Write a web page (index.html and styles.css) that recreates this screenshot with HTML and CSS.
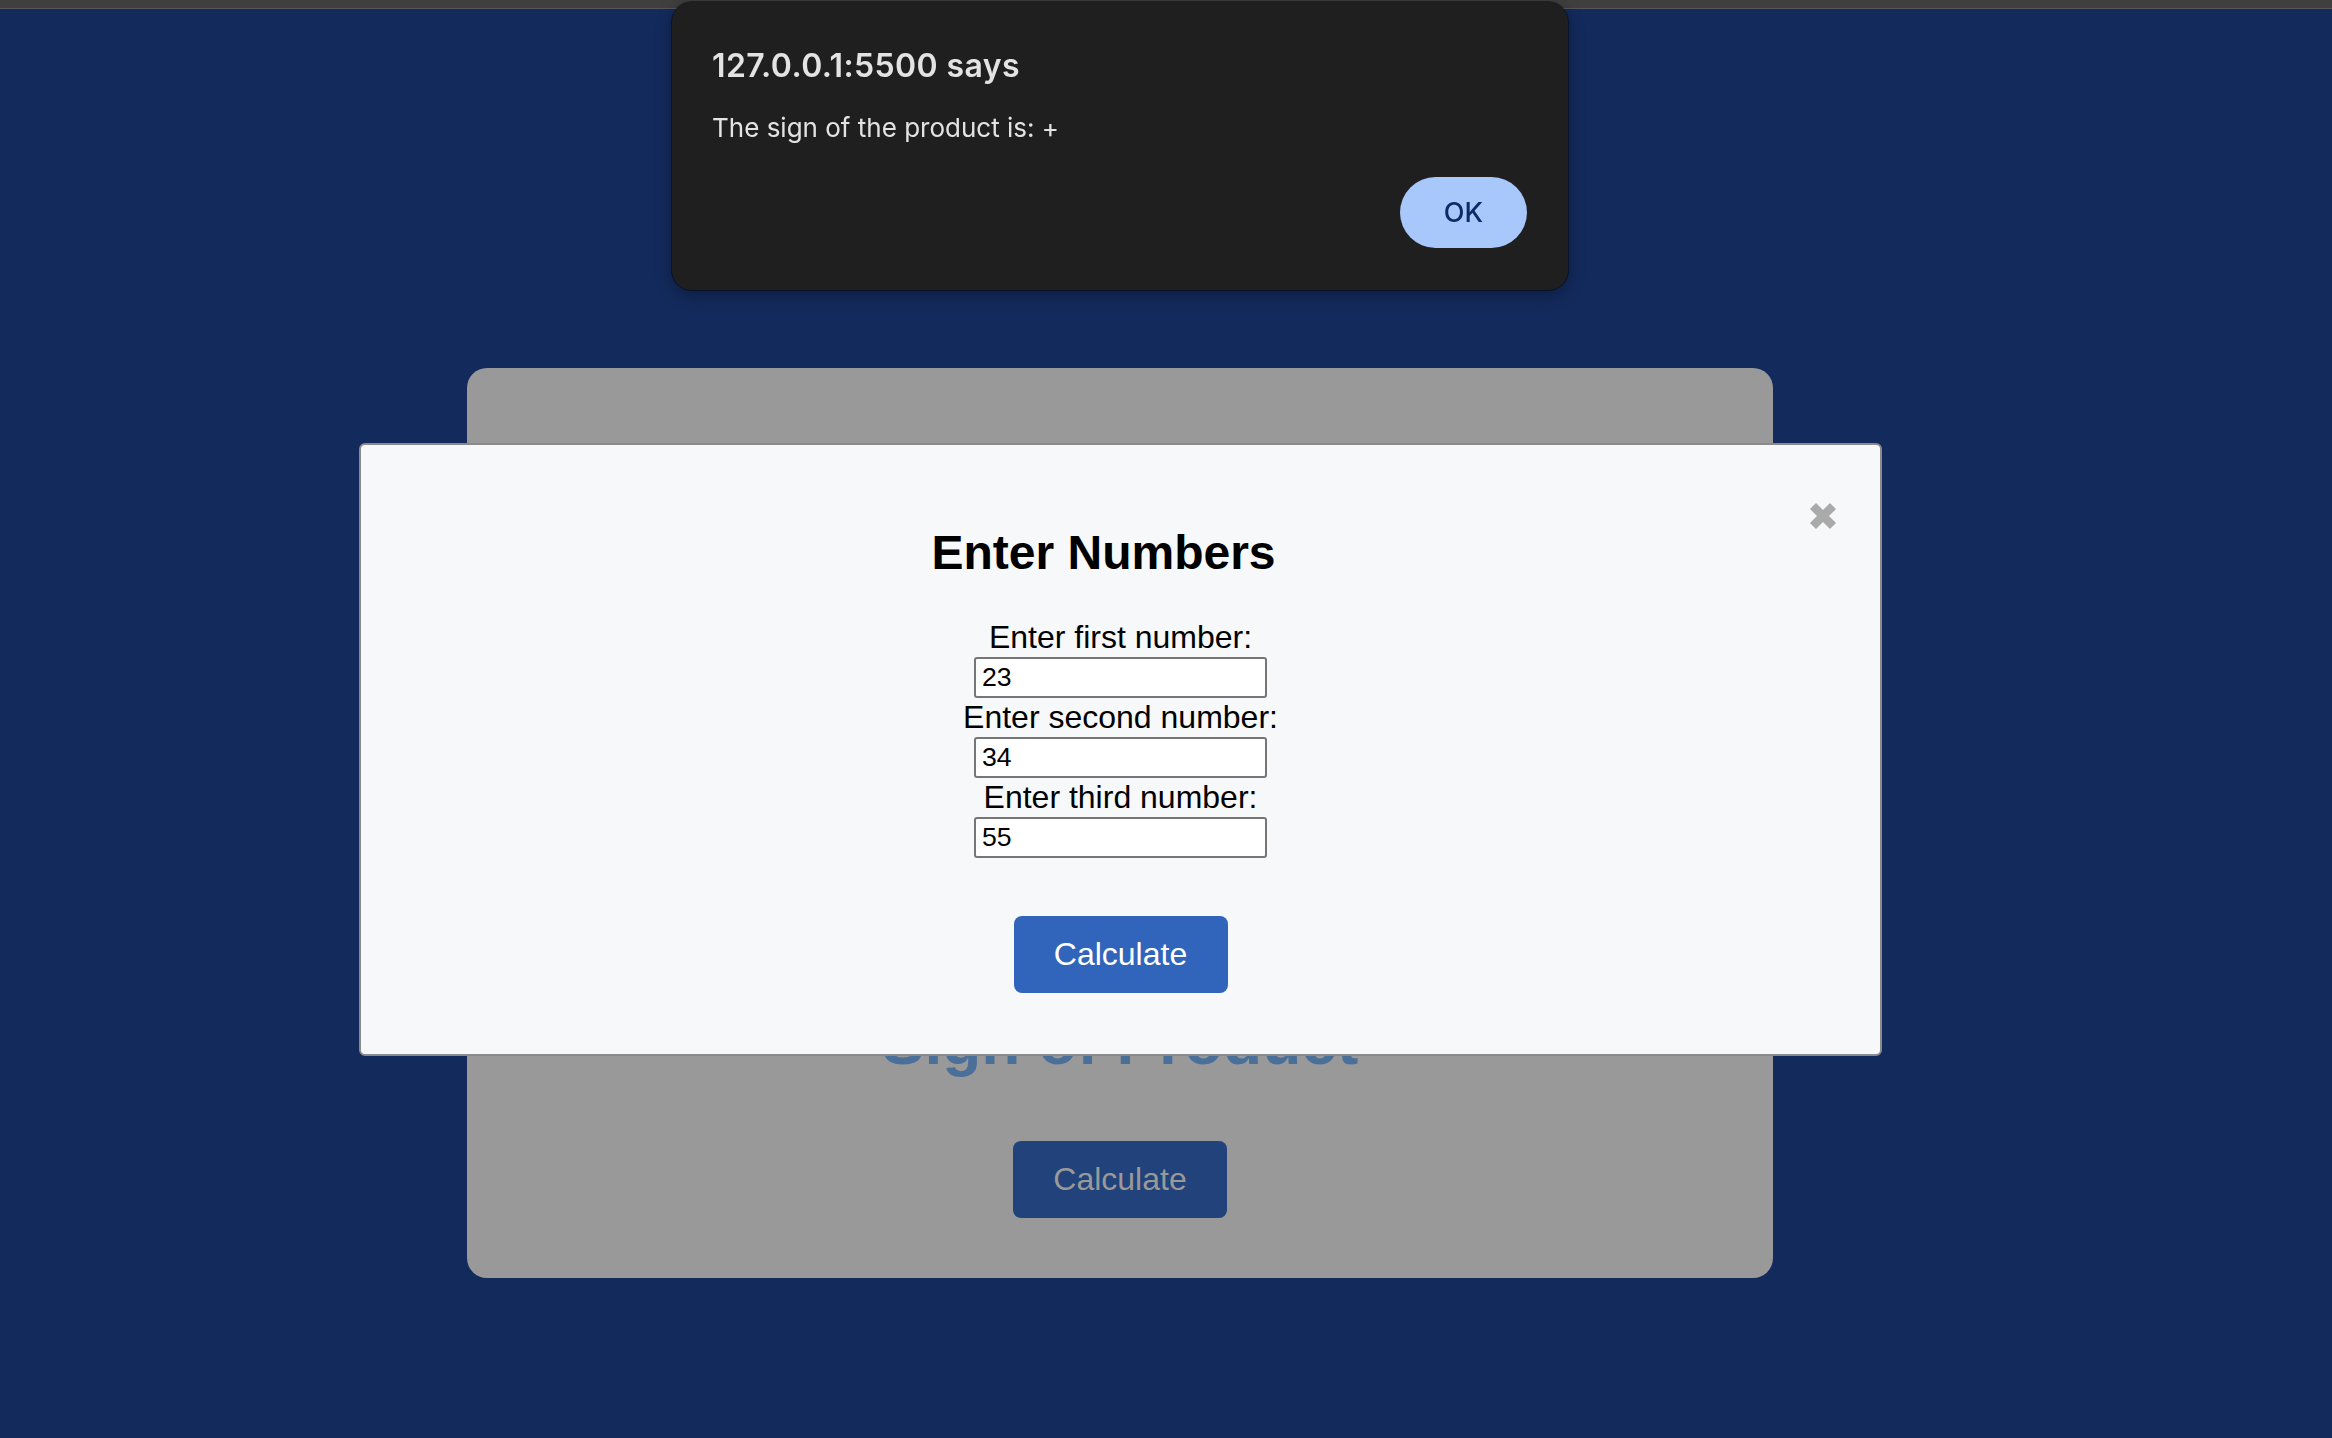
FILE: index.html
```html
<!DOCTYPE html>
<html lang="en">
<head>
<meta charset="utf-8">
<title>Sign of Product</title>
<link rel="stylesheet" href="styles.css">
</head>
<body>
<div class="topbar"></div>
<main class="page">
  <section class="card">
    <h1 class="card-title">Sign of Product</h1>
    <button class="card-btn" type="button">Calculate</button>
  </section>
</main>

<div class="modal">
  <span class="close" aria-label="Close">
    <svg class="close-icon" width="28" height="28" viewBox="0 0 28 28"><path d="M4 4L24 24M24 4L4 24" stroke="#aaaaaa" stroke-width="8.5" stroke-linecap="butt" fill="none"/></svg>
  </span>
  <h2 class="modal-title">Enter Numbers</h2>
  <form class="fields">
    <label class="field-label" for="n1">Enter first number:</label>
    <input id="n1" class="field-input" type="text" value="23">
    <label class="field-label" for="n2">Enter second number:</label>
    <input id="n2" class="field-input" type="text" value="34">
    <label class="field-label" for="n3">Enter third number:</label>
    <input id="n3" class="field-input" type="text" value="55">
  </form>
  <button class="calc-btn" type="button">Calculate</button>
</div>

<div class="alert">
  <div class="alert-title">127.0.0.1:5500 says</div>
  <div class="alert-msg">The sign of the product is: +</div>
  <div class="alert-actions"><button class="alert-ok" type="button">OK</button></div>
</div>
</body>
</html>
```

FILE: styles.css
```css
html, body {
  margin: 0;
  padding: 0;
}
body {
  background: #132a5c;
  font-family: "Liberation Sans", Arial, sans-serif;
  height: 1438px;
  overflow: hidden;
}
.topbar {
  height: 8px;
  background: #3f3f3f;
  border-bottom: 1px solid #575757;
}
.page {
  display: flex;
  justify-content: flex-start;
  padding-top: 359px;
  padding-left: 467px;
}
.card {
  width: 1306px;
  height: 910px;
  box-sizing: border-box;
  background: #999999;
  border-radius: 20px;
  display: flex;
  flex-direction: column;
  align-items: center;
  justify-content: flex-end;
  padding-bottom: 60px;
}
.card-title {
  margin: 0;
  font-size: 64px;
  font-weight: bold;
  line-height: normal;
  color: #4a6f99;
}
.card-btn {
  margin-top: 62px;
  width: 214px;
  height: 77px;
  border: none;
  border-radius: 8px;
  background: #21427a;
  color: #999999;
  font-family: "Liberation Sans", Arial, sans-serif;
  font-size: 32px;
  padding: 0;
}

.modal {
  position: fixed;
  left: 359px;
  top: 443px;
  width: 1523px;
  box-sizing: border-box;
  border: 2px solid #8a8a8a;
  border-radius: 6px;
  background: #f7f8f9;
  padding: 40px;
  text-align: center;
}
.close {
  float: right;
  width: 34px;
  height: 64px;
  box-sizing: border-box;
  padding-top: 17px;
  display: flex;
  justify-content: center;
  align-items: flex-start;
}
.close-icon {
  display: block;
}
.modal-title {
  margin: 40px 0 38px;
  font-size: 48px;
  font-weight: bold;
  line-height: normal;
  color: #000000;
}
.fields {
  display: flex;
  flex-direction: column;
  align-items: center;
  margin: 0;
}
.field-label {
  font-size: 32px;
  line-height: 39px;
  color: #000000;
}
.field-input {
  width: 293px;
  height: 41px;
  box-sizing: border-box;
  border: 2px solid #767676;
  border-radius: 3px;
  padding: 0 6px;
  font-family: "Liberation Sans", Arial, sans-serif;
  font-size: 26.67px;
  color: #000000;
  background: #ffffff;
  margin: 0;
}
.calc-btn {
  display: block;
  margin: 58px auto 21px;
  width: 214px;
  height: 77px;
  border: none;
  border-radius: 8px;
  background: #3165bb;
  color: #ffffff;
  font-family: "Liberation Sans", Arial, sans-serif;
  font-size: 32px;
  padding: 0;
}

.alert {
  position: fixed;
  left: 672px;
  top: 2px;
  width: 896px;
  height: 288px;
  box-sizing: border-box;
  background: #1f1f1f;
  border-radius: 20px;
  box-shadow: 0 0 0 1px rgba(0, 0, 0, 0.45), 0 4px 16px rgba(0, 0, 0, 0.35);
  padding: 45px 41px 0 40px;
  font-family: Inter, "Noto Sans", sans-serif;
  color: #e3e3e3;
}
.alert-title {
  font-size: 32px;
  font-weight: 600;
  letter-spacing: 0.4px;
  line-height: 38px;
}
.alert-msg {
  margin-top: 27px;
  font-size: 26px;
  line-height: 32px;
}
.alert-actions {
  display: flex;
  justify-content: flex-end;
  margin-top: 33px;
}
.alert-ok {
  width: 127px;
  height: 71px;
  border: none;
  border-radius: 36px;
  background: #a8c7fa;
  color: #0b2a66;
  font-family: Inter, "Noto Sans", sans-serif;
  font-size: 27px;
  font-weight: 500;
  padding: 0;
}
```
